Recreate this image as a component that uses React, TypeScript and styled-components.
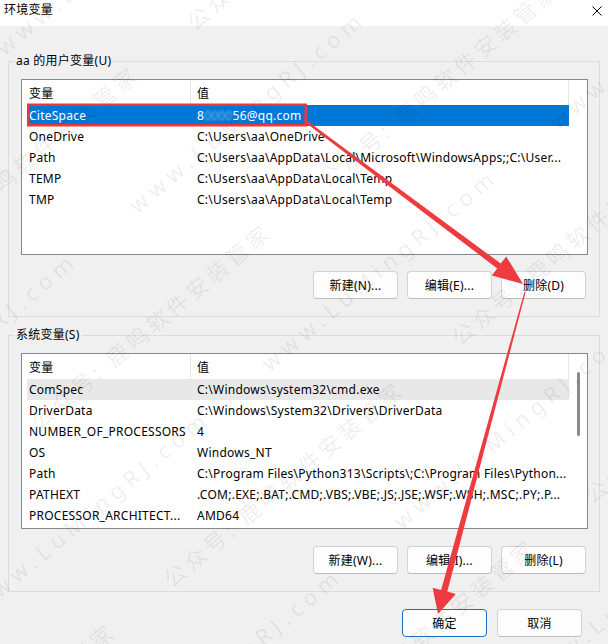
import React from 'react';
import styled, { createGlobalStyle } from 'styled-components';

const GlobalStyle = createGlobalStyle`
  html, body { margin: 0; padding: 0; }
  body {
    background: #f0f0f0;
    font-family: "Noto Sans", "Noto Sans CJK SC", sans-serif;
    font-size: 12px;
    letter-spacing: 0.25px;
    color: #000;
  }
  * { box-sizing: border-box; }
`;

const Window = styled.div`
  position: relative;
  width: 608px;
  height: 644px;
  overflow: hidden;
  background: #f0f0f0;
  display: flex;
  flex-direction: column;
`;

const TitleBar = styled.div`
  height: 26px;
  flex: none;
  background: #fff;
  display: flex;
  align-items: flex-start;
  justify-content: space-between;
  padding: 2px 6px 0 4px;
`;

const Title = styled.span`
  line-height: 16px;
  font-size: 12px;
`;

const CloseBtn = styled.span`
  display: flex;
  margin-top: 4px;
`;

const Body = styled.div`
  display: flex;
  flex-direction: column;
  padding: 27px 8px 0 8px;
  gap: 10px;
`;

const Group = styled.fieldset`
  margin: 0;
  padding: 0;
  min-width: 0;
  border: 1px solid #dcdcdc;
`;

const Legend = styled.legend`
  margin-left: 5px;
  padding: 0 2px;
  line-height: 16px;
  font-size: 12px;
`;

const GroupContent = styled.div`
  display: flex;
  flex-direction: column;
  padding: 10px 11px 17px 12px;
`;

const ListBox = styled.div`
  height: 176px;
  border: 1px solid #828790;
  background: #fff;
  display: flex;
  padding-left: 5px;
`;

const ListMain = styled.div`
  width: 542px;
  display: flex;
  flex-direction: column;
`;

const Gutter = styled.div`
  flex: 1;
  display: flex;
  justify-content: flex-start;
  padding-left: 8px;
`;

const Thumb = styled.div`
  width: 3px;
  height: 64px;
  margin-top: 18px;
  border-radius: 1.5px;
  background: #8a8a8a;
`;

const HeaderRow = styled.div`
  height: 25px;
  display: flex;
  align-items: stretch;
`;

const HeaderCell = styled.div<{ $w: number; $pad: number }>`
  width: ${(p) => p.$w}px;
  flex: none;
  padding-left: ${(p) => p.$pad}px;
  display: flex;
  align-items: center;
  border-right: 1px solid #e5e5e5;
  white-space: nowrap;
`;

const Row = styled.div<{ $state?: 'selected' | 'hover' }>`
  height: 21px;
  display: flex;
  align-items: center;
  background: ${(p) =>
    p.$state === 'selected' ? '#0078d7' : p.$state === 'hover' ? '#e8e8e8' : 'transparent'};
  color: ${(p) => (p.$state === 'selected' ? '#fff' : '#000')};
`;

const Cell = styled.div<{ $w: number; $pad: number }>`
  width: ${(p) => p.$w}px;
  flex: none;
  padding-left: ${(p) => p.$pad}px;
  white-space: nowrap;
  overflow: hidden;
  line-height: 21px;
`;

const Masked = styled.span`
  color: rgba(255, 255, 255, 0.45);
  filter: blur(0.8px);
`;

const ButtonRow = styled.div<{ $top: number; $right: number }>`
  display: flex;
  justify-content: flex-end;
  gap: 9px;
  margin-top: ${(p) => p.$top}px;
  padding-right: ${(p) => p.$right}px;
`;

const DialogButtons = styled.div`
  display: flex;
  justify-content: flex-end;
  gap: 10px;
  margin-top: 17px;
  padding-right: 26px;
`;

const Button = styled.button<{ $primary?: boolean }>`
  width: 85px;
  height: 28px;
  padding: 0;
  border-radius: 4px;
  background: #fdfdfd;
  border: 1px solid ${(p) => (p.$primary ? '#1f6fc0' : '#d2d2d2')};
  border-bottom-color: ${(p) => (p.$primary ? '#1f6fc0' : '#bdbdbd')};
  font-family: "Noto Sans", "Noto Sans CJK SC", sans-serif;
  font-size: 12px;
  letter-spacing: 0.25px;
  color: #000;
  display: flex;
  align-items: center;
  justify-content: center;
`;

const Overlay = styled.svg`
  position: absolute;
  left: 0;
  top: 0;
  pointer-events: none;
`;

const WatermarkLayer = styled.div`
  position: absolute;
  inset: 0;
  overflow: hidden;
  pointer-events: none;
`;

const WatermarkSheet = styled.div`
  position: absolute;
  left: 136px;
  top: 213px;
  transform-origin: 0 0;
  transform: rotate(-40deg) translate(-752px, -329px);
  display: flex;
  flex-direction: column;
`;

const WatermarkRow = styled.div<{ $offset: number }>`
  height: 103px;
  display: flex;
  padding-left: ${(p) => p.$offset}px;
`;

const WatermarkText = styled.span<{ $spacing: number }>`
  width: 376px;
  flex: none;
  white-space: nowrap;
  font-family: "Noto Sans", "Noto Sans CJK SC", sans-serif;
  font-size: 22px;
  line-height: 26px;
  letter-spacing: ${(p) => p.$spacing}px;
  color: rgba(0, 0, 0, 0.085);
`;

type Item = { name: string; value: React.ReactNode; state?: 'selected' | 'hover' };

const userVars: Item[] = [
  {
    name: 'CiteSpace',
    value: (
      <>
        8<Masked>0000</Masked>56@qq.com
      </>
    ),
    state: 'selected',
  },
  { name: 'OneDrive', value: 'C:\\Users\\aa\\OneDrive' },
  { name: 'Path', value: 'C:\\Users\\aa\\AppData\\Local\\Microsoft\\WindowsApps;;C:\\User...' },
  { name: 'TEMP', value: 'C:\\Users\\aa\\AppData\\Local\\Temp' },
  { name: 'TMP', value: 'C:\\Users\\aa\\AppData\\Local\\Temp' },
];

const sysVars: Item[] = [
  { name: 'ComSpec', value: 'C:\\Windows\\system32\\cmd.exe', state: 'hover' },
  { name: 'DriverData', value: 'C:\\Windows\\System32\\Drivers\\DriverData' },
  { name: 'NUMBER_OF_PROCESSORS', value: '4' },
  { name: 'OS', value: 'Windows_NT' },
  { name: 'Path', value: 'C:\\Program Files\\Python313\\Scripts\\;C:\\Program Files\\Python...' },
  { name: 'PATHEXT', value: '.COM;.EXE;.BAT;.CMD;.VBS;.VBE;.JS;.JSE;.WSF;.WSH;.MSC;.PY;.P...' },
  { name: 'PROCESSOR_ARCHITECT...', value: 'AMD64' },
];

const VarList: React.FC<{ items: Item[]; scroll?: boolean }> = ({ items, scroll }) => (
  <ListBox>
    <ListMain>
      <HeaderRow>
        <HeaderCell $w={164} $pad={2}>变量</HeaderCell>
        <HeaderCell $w={378} $pad={6}>值</HeaderCell>
      </HeaderRow>
      {items.map((it, i) => (
        <Row key={i} $state={it.state}>
          <Cell $w={164} $pad={2}>{it.name}</Cell>
          <Cell $w={378} $pad={6}>{it.value}</Cell>
        </Row>
      ))}
    </ListMain>
    <Gutter>{scroll && <Thumb />}</Gutter>
  </ListBox>
);

const Watermark: React.FC = () => {
  const rows = [];
  for (let k = -3; k <= 7; k++) {
    const even = k % 2 === 0;
    rows.push(
      <WatermarkRow key={k} $offset={even ? 0 : 162}>
        {[0, 1, 2, 3].map((n) =>
          even ? (
            <WatermarkText key={n} $spacing={6}>www.LuMingRJ.com</WatermarkText>
          ) : (
            <WatermarkText key={n} $spacing={4}>公众号: 鹿鸣软件安装管家</WatermarkText>
          )
        )}
      </WatermarkRow>
    );
  }
  return (
    <WatermarkLayer>
      <WatermarkSheet>{rows}</WatermarkSheet>
    </WatermarkLayer>
  );
};

export default function App() {
  return (
    <>
      <GlobalStyle />
      <Window>
        <TitleBar>
          <Title>环境变量</Title>
          <CloseBtn>
            <svg width="10" height="10" viewBox="0 0 10 10">
              <path d="M0.5 0.5 L9.5 9.5 M9.5 0.5 L0.5 9.5" stroke="#000" strokeWidth="1" fill="none" />
            </svg>
          </CloseBtn>
        </TitleBar>
        <Body>
          <Group>
            <Legend>aa 的用户变量(U)</Legend>
            <GroupContent>
              <VarList items={userVars} />
              <ButtonRow $top={16} $right={2}>
                <Button>新建(N)...</Button>
                <Button>编辑(E)...</Button>
                <Button>删除(D)</Button>
              </ButtonRow>
            </GroupContent>
          </Group>
          <Group>
            <Legend>系统变量(S)</Legend>
            <GroupContent>
              <VarList items={sysVars} scroll />
              <ButtonRow $top={17} $right={2}>
                <Button>新建(W)...</Button>
                <Button>编辑(I)...</Button>
                <Button>删除(L)</Button>
              </ButtonRow>
            </GroupContent>
          </Group>
        </Body>
        <DialogButtons>
          <Button $primary>确定</Button>
          <Button>取消</Button>
        </DialogButtons>
        <Watermark />
        <Overlay width="608" height="644" viewBox="0 0 608 644">
          <rect x="28.25" y="104.75" width="277.5" height="20.5" fill="none" stroke="#e8383d" strokeWidth="2.5" />
          <polygon
            fill="#ee3b3f"
            points="304.7,119 500.8,263.6 506.2,256.4 523,284 491.8,275.6 497.2,268.4 303.3,121"
          />
          <polygon
            fill="#ee3b3f"
            points="524.4,291.8 525.6,292.2 447.3,591.6 455.8,593.9 438,614 432.6,587.7 441.1,590"
          />
        </Overlay>
      </Window>
    </>
  );
}
